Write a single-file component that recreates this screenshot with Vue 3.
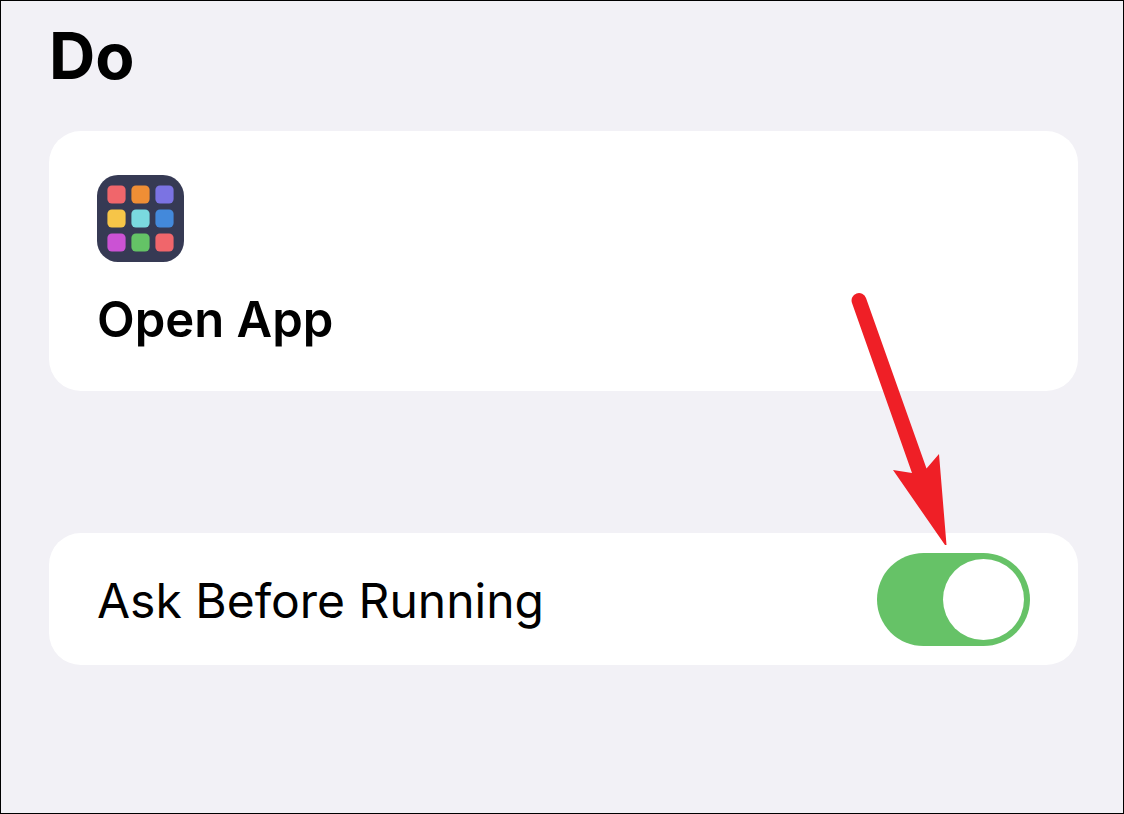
<script setup>
import { ref } from 'vue'

const askBeforeRunning = ref(true)

const tiles = [
  '#f0666b', '#ef8e35', '#7b73e3',
  '#f6c548', '#7ad9df', '#4389db',
  '#cb52d4', '#64c366', '#f0666b',
].map((fill, i) => ({ fill, x: 10.4 + (i % 3) * 24, y: 10.4 + Math.floor(i / 3) * 24 }))
</script>

<template>
  <main class="screen">
    <h1 class="title">Do</h1>

    <section class="card action">
      <svg class="app-icon" viewBox="0 0 87 87" aria-hidden="true">
        <rect width="87" height="87" rx="21" fill="#363a54" />
        <rect
          v-for="tile in tiles"
          :key="`${tile.x}-${tile.y}`"
          :x="tile.x"
          :y="tile.y"
          width="18.2"
          height="18.2"
          rx="4.5"
          :fill="tile.fill"
        />
      </svg>
      <h2 class="action-name">Open App</h2>
    </section>

    <section class="card setting">
      <label class="setting-label" for="ask-before-running">Ask Before Running</label>
      <div class="switch-wrap">
        <input
          id="ask-before-running"
          v-model="askBeforeRunning"
          class="switch"
          type="checkbox"
          role="switch"
        />
        <svg class="arrow" viewBox="0 0 130 280" aria-hidden="true">
          <path
            d="M12 23 A7.2 7.2 0 0 1 26 18 L86.500 188.500 L99 174 L106.500 265 L105 265 L53 190 L72 193 Z"
            fill="#ef1f26"
          />
        </svg>
      </div>
    </section>
  </main>
</template>

<style>
body {
  margin: 0;
  background: #f2f1f6;
}
</style>

<style scoped>
.screen {
  box-sizing: border-box;
  min-height: 100vh;
  padding: 15px 45px 48px 48px;
  border: 1px solid #000;
  background: #f2f1f6;
  color: #000;
  font-family: Inter, "Liberation Sans", sans-serif;
}

.title {
  margin: 0 0 35px;
  font-size: 64px;
  line-height: 80px;
  font-weight: 700;
}

.card {
  background: #fff;
  border-radius: 32px;
}

.action {
  padding: 44px 48px 41px;
  margin-bottom: 142px;
}

.app-icon {
  display: block;
  width: 87px;
  height: 87px;
  margin-bottom: 28px;
}

.action-name {
  margin: 0;
  font-size: 49px;
  line-height: 60px;
  font-weight: 600;
}

.setting {
  display: flex;
  align-items: center;
  justify-content: space-between;
  min-height: 132px;
  padding: 0 48px;
}

.setting-label {
  padding-top: 4px;
  font-size: 48px;
  line-height: 60px;
}

.switch-wrap {
  position: relative;
  flex: none;
}

.switch {
  appearance: none;
  display: flex;
  align-items: center;
  box-sizing: border-box;
  width: 153px;
  height: 93px;
  margin: 0;
  padding: 6px;
  border-radius: 47px;
  background: #d9d9de;
  cursor: pointer;
}

.switch::before {
  content: "";
  width: 81px;
  height: 81px;
  border-radius: 50%;
  background: #fff;
}

.switch:checked {
  justify-content: flex-end;
  background: #66c267;
}

.arrow {
  position: absolute;
  left: -37px;
  top: -273px;
  width: 130px;
  height: 280px;
  pointer-events: none;
}
</style>
